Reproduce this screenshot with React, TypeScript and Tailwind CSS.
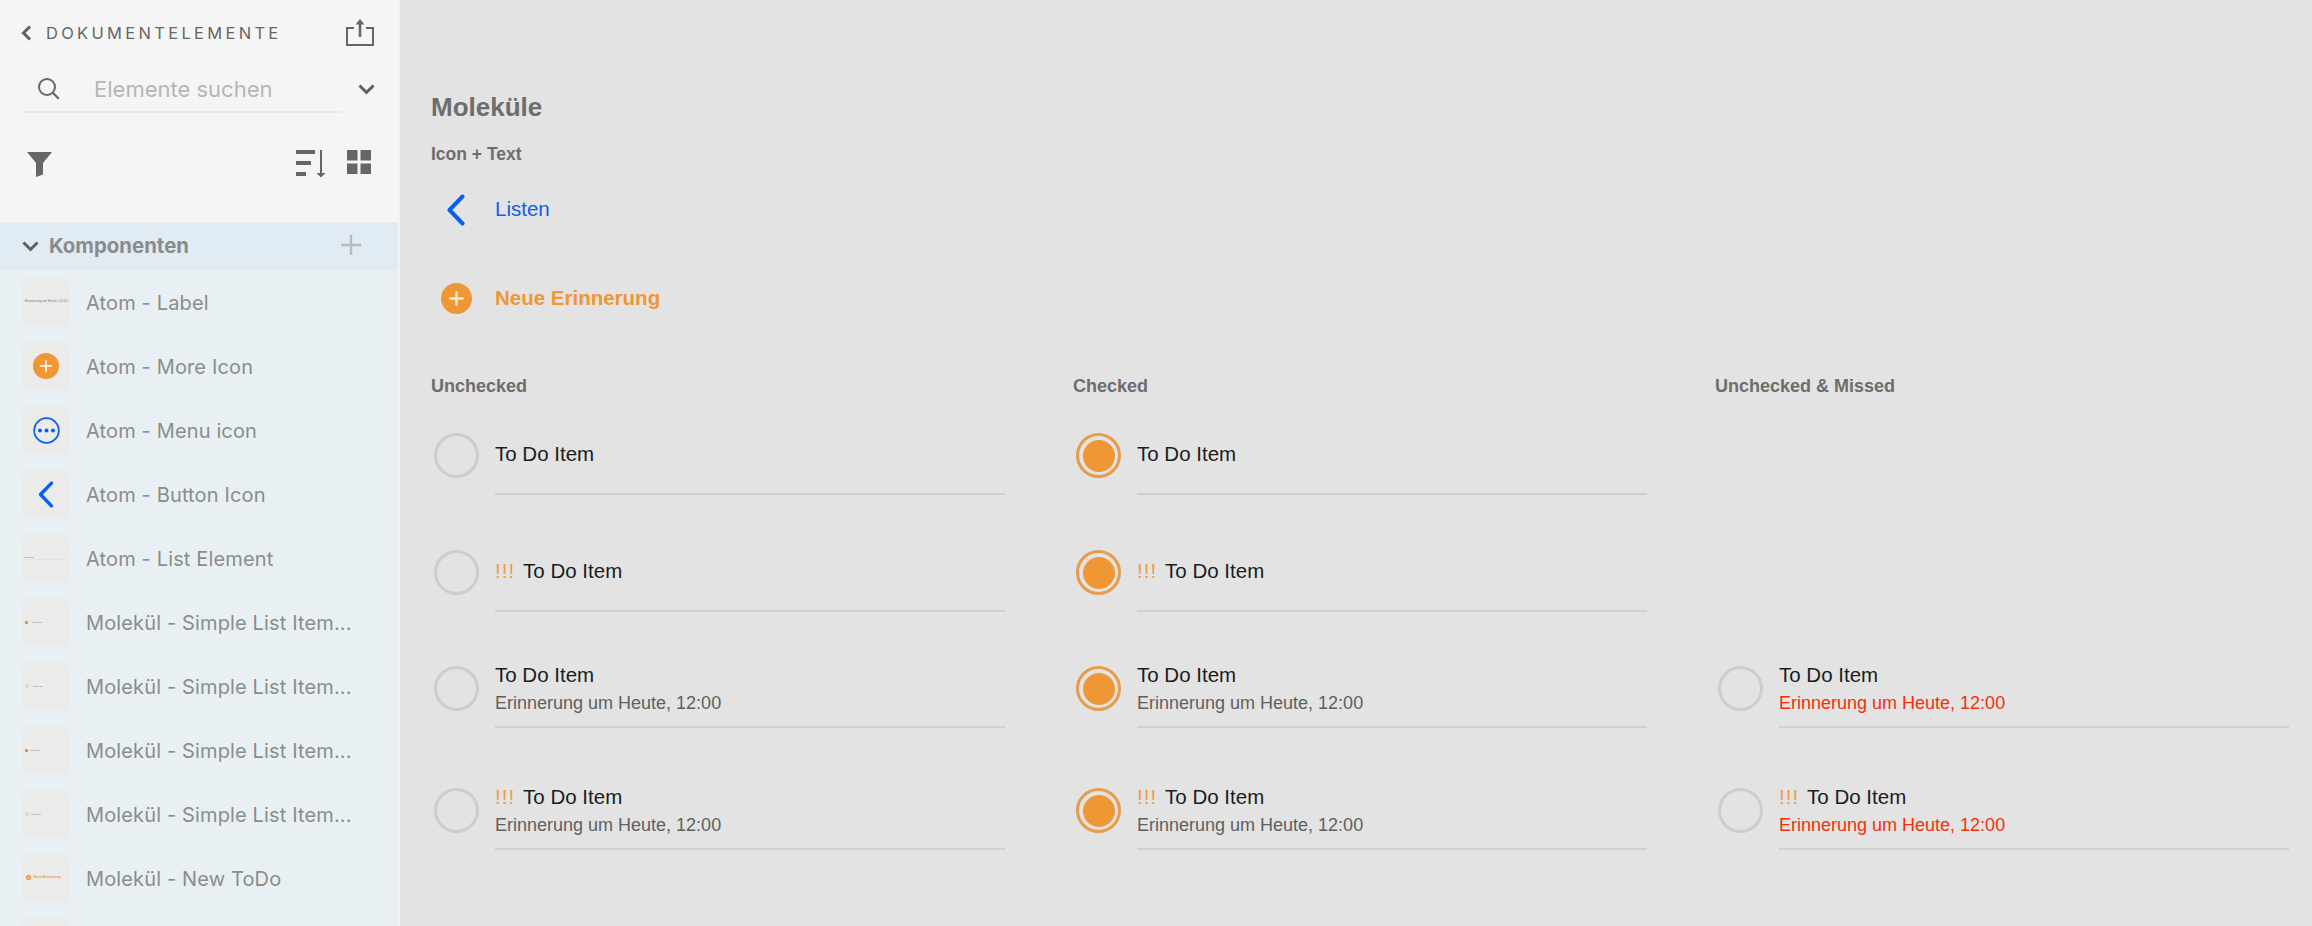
import React from "react";

const sans = "font-['Inter',sans-serif]";

function PlusCircle({ size }: { size: number }) {
  return (
    <svg width={size} height={size} viewBox="0 0 32 32">
      <circle cx="16" cy="16" r="16" fill="#ef9734" />
      <path d="M16 9.5v13M9.5 16h13" stroke="#f3ead9" strokeWidth="2.4" strokeLinecap="round" />
    </svg>
  );
}

function BackIcon({ width, height }: { width: number; height: number }) {
  return (
    <svg width={width} height={height} viewBox="0 0 18 32" fill="none">
      <path d="M15.5 2.5 2.5 16l13 13.5" stroke="#0a5ff0" strokeWidth="4" strokeLinecap="round" strokeLinejoin="round" />
    </svg>
  );
}

function Thumb({ children }: { children?: React.ReactNode }) {
  return (
    <div className="relative flex h-12 w-12 shrink-0 items-center justify-center overflow-hidden rounded bg-[#ebebeb]">
      {children}
    </div>
  );
}

function MiniItem({ checked, gap }: { checked: boolean; gap: string }) {
  return (
    <div className="flex w-full items-center pl-[3px]">
      {checked ? (
        <div className="h-[3px] w-[3px] bg-[#ef9734]" />
      ) : (
        <div className="h-[4px] w-[4px] rounded-full border-[0.5px] border-[#d0d0d0]" />
      )}
      <span className={`${gap} font-['Liberation_Sans',sans-serif] text-[2px] leading-none text-[#666]`}>To Do Item</span>
    </div>
  );
}

const components: { label: string; thumb: React.ReactNode }[] = [
  {
    label: "Atom - Label",
    thumb: <span className="whitespace-nowrap font-['Liberation_Sans',sans-serif] text-[3.4px] text-[#777]">Erinnerung um Heute, 12:00</span>,
  },
  { label: "Atom - More Icon", thumb: <PlusCircle size={26} /> },
  {
    label: "Atom - Menu icon",
    thumb: (
      <svg width="27" height="27" viewBox="0 0 27 27" fill="none">
        <circle cx="13.5" cy="13.5" r="12.3" stroke="#0a5ff0" strokeWidth="1.8" />
        <circle cx="7" cy="13.5" r="2" fill="#0a5ff0" />
        <circle cx="13.5" cy="13.5" r="2" fill="#0a5ff0" />
        <circle cx="20" cy="13.5" r="2" fill="#0a5ff0" />
      </svg>
    ),
  },
  { label: "Atom - Button Icon", thumb: <BackIcon width={16} height={27} /> },
  {
    label: "Atom - List Element",
    thumb: (
      <div className="w-full pl-[2px] pr-[3px]">
        <div className="font-['Liberation_Sans',sans-serif] text-[2px] leading-none text-[#666]">To Do Item</div>
        <div className="mt-[1px] h-px bg-[#e2e2e2]" />
      </div>
    ),
  },
  { label: "Molekül - Simple List Item...", thumb: <MiniItem checked gap="ml-[4px]" /> },
  { label: "Molekül - Simple List Item...", thumb: <MiniItem checked={false} gap="ml-[4px]" /> },
  { label: "Molekül - Simple List Item...", thumb: <MiniItem checked gap="ml-[2px]" /> },
  { label: "Molekül - Simple List Item...", thumb: <MiniItem checked={false} gap="ml-[2px]" /> },
  {
    label: "Molekül - New ToDo",
    thumb: (
      <div className="flex w-full items-center pl-1">
        <PlusCircle size={5} />
        <span className="ml-[2.5px] whitespace-nowrap font-['Liberation_Sans',sans-serif] text-[3.4px] font-bold text-[#ef9734]">Neue Erinnerung</span>
      </div>
    ),
  },
  { label: "", thumb: null },
];

function Sidebar() {
  return (
    <aside className={`h-[926px] w-[400px] shrink-0 overflow-hidden border-r-2 border-[#f2f2f2] bg-[#f5f5f5] ${sans}`}>
      <div className="flex h-[66px] items-center pl-[21px] pr-[24px]">
        <svg width="11" height="16" viewBox="0 0 11 16" fill="none">
          <path d="M9 1.5 2.500 8 9 14.500" stroke="#5f5f5f" strokeWidth="3" />
        </svg>
        <span className="ml-[14px] mt-[1px] text-[16.5px] tracking-[0.2em] text-[#666]">DOKUMENTELEMENTE</span>
        <svg className="ml-auto -mt-[2px]" width="28" height="28" viewBox="0 0 28 28" fill="none">
          <path d="M8 10H1v17h26V10h-7" stroke="#666" strokeWidth="2" />
          <path d="M14 19V3" stroke="#666" strokeWidth="2.6" />
          <path d="M9.500 6.500 14 1l4.500 5.500z" fill="#666" />
        </svg>
      </div>
      <div className="flex h-[47px] items-center pl-[24px] pr-[23px]">
        <div className="flex h-[47px] w-[318px] items-center border-b-2 border-[#e8e8e8] pl-[14px]">
          <svg width="22" height="22" viewBox="0 0 22 22" fill="none">
            <circle cx="9" cy="9" r="8" stroke="#666" strokeWidth="2" />
            <path d="m14.800 14.800 6 6" stroke="#666" strokeWidth="2.2" />
          </svg>
          <span className="ml-[34px] mt-[2px] text-[22px] text-[#b6b6b6]">Elemente suchen</span>
        </div>
        <svg className="ml-auto" width="17" height="11" viewBox="0 0 17 11" fill="none">
          <path d="m1.500 1.500 7 7 7-7" stroke="#5f5f5f" strokeWidth="3" />
        </svg>
      </div>
      <div className="flex h-[109px] items-start pl-[27px] pr-[27px] pt-[37px]">
        <svg className="mt-[1px]" width="25" height="26" viewBox="0 0 25 26" fill="#666">
          <path d="M0 1h25l-9 11v11.500l-7 2.500V12z" />
        </svg>
        <svg className="ml-auto" width="30" height="28" viewBox="0 0 30 28" fill="#666">
          <path d="M0 0h19v4H0zM0 11h15v4H0zM0 22h10v4H0z" />
          <path d="M24 0h2v23h3.500L25 27.500 20.500 23H24z" />
        </svg>
        <svg className="ml-[21px]" width="24" height="24" viewBox="0 0 24 24" fill="#666">
          <path d="M0 0h10.500v10.500H0zM13.500 0H24v10.500H13.500zM0 13.500h10.500V24H0zM13.500 13.500H24V24H13.500z" />
        </svg>
      </div>
      <div className="flex h-[48px] items-center bg-[#e0ebf3] pl-[22px] pr-[37px]">
        <svg width="17" height="11" viewBox="0 0 17 11" fill="none">
          <path d="m1.500 1.500 7 7 7-7" stroke="#5f5f5f" strokeWidth="3" />
        </svg>
        <span className="ml-[10px] mt-[1px] text-[20.4px] font-bold text-[#8b8b8b]">Komponenten</span>
        <svg className="ml-auto -mt-[2px]" width="20" height="20" viewBox="0 0 20 20" fill="none">
          <path d="M10 0v20M0 10h20" stroke="#b5bbc0" strokeWidth="2.4" />
        </svg>
      </div>
      <ul className="bg-[#e8f0f4]">
        {components.map((item, i) => (
          <li key={i} className="flex h-16 items-center pl-[22px]">
            <Thumb>{item.thumb}</Thumb>
            {item.label && (
              <span className="ml-[16px] mt-[2px] whitespace-nowrap text-[20px] tracking-[0.007em] text-[#8c8c8c]">{item.label}</span>
            )}
          </li>
        ))}
      </ul>
    </aside>
  );
}

type TodoProps = {
  state: "unchecked" | "checked";
  urgent?: boolean;
  reminder?: boolean;
  missed?: boolean;
  gap: string;
};

function Todo({ state, urgent, reminder, missed, gap }: TodoProps) {
  return (
    <div className={`flex h-[79px] ${gap}`}>
      <div className="flex w-[64px] shrink-0 items-center pl-[3px]">
        {state === "checked" ? (
          <div className="flex h-[45px] w-[45px] items-center justify-center rounded-full border-[3px] border-[#e79c4b]">
            <div className="h-8 w-8 rounded-full bg-[#ef9734]" />
          </div>
        ) : (
          <div className="h-[45px] w-[45px] rounded-full border-[3px] border-[#cdcdcd]" />
        )}
      </div>
      <div className={`flex w-[510px] flex-col justify-center border-b-2 border-[#cfcfcf] ${reminder ? "" : "pb-[2px]"}`}>
        <div className="text-[20.5px] leading-[24px] text-[#1c1c1c]">
          {urgent && <span className="mr-[8px] tracking-[1px] text-[#ef9c45]">!!!</span>}
          To Do Item
        </div>
        {reminder && (
          <div className={`mt-[6px] text-[18px] leading-[20px] ${missed ? "text-[#f3300c]" : "text-[#5f5f5f]"}`}>
            Erinnerung um Heute, 12:00
          </div>
        )}
      </div>
    </div>
  );
}

function Column({ title, state, missed }: { title: string; state: "unchecked" | "checked"; missed?: boolean }) {
  return (
    <div className="w-[642px] shrink-0">
      <h3 className="text-[18px] font-bold leading-[22px] text-[#6d6d6d]">{title}</h3>
      <div className="pt-[19px]">
        {missed ? (
          <div className="h-[233px]" />
        ) : (
          <>
            <Todo state={state} gap="mb-[38px]" />
            <Todo state={state} urgent gap="mb-[37px]" />
          </>
        )}
        <Todo state={state} reminder missed={missed} gap="mb-[43px]" />
        <Todo state={state} urgent reminder missed={missed} gap="" />
      </div>
    </div>
  );
}

export default function App() {
  return (
    <div className="flex h-[926px] w-[2312px] overflow-hidden bg-[#e3e3e3] font-['Liberation_Sans',sans-serif]">
      <Sidebar />
      <main className="flex-1 pl-[31px] pt-[91px]">
        <h1 className="text-[26px] font-bold leading-[32px] text-[#6d6d6d]">Moleküle</h1>
        <h2 className="mt-[19px] text-[17.5px] font-bold leading-[24px] text-[#6d6d6d]">Icon + Text</h2>
        <div className="mt-[24px] flex h-[40px] items-center">
          <div className="flex w-[64px] justify-center pr-[14px]">
            <BackIcon width={18} height={32} />
          </div>
          <span className="-mt-[1px] text-[20.5px] text-[#0a5ff0]">Listen</span>
        </div>
        <div className="mt-[48px] flex h-[40px] items-center">
          <div className="flex w-[64px] justify-center pr-[14px]">
            <PlusCircle size={31} />
          </div>
          <span className="text-[20.5px] font-bold text-[#ef9734]">Neue Erinnerung</span>
        </div>
        <div className="mt-[57px] flex">
          <Column title="Unchecked" state="unchecked" />
          <Column title="Checked" state="checked" />
          <Column title="Unchecked & Missed" state="unchecked" missed />
        </div>
      </main>
    </div>
  );
}
